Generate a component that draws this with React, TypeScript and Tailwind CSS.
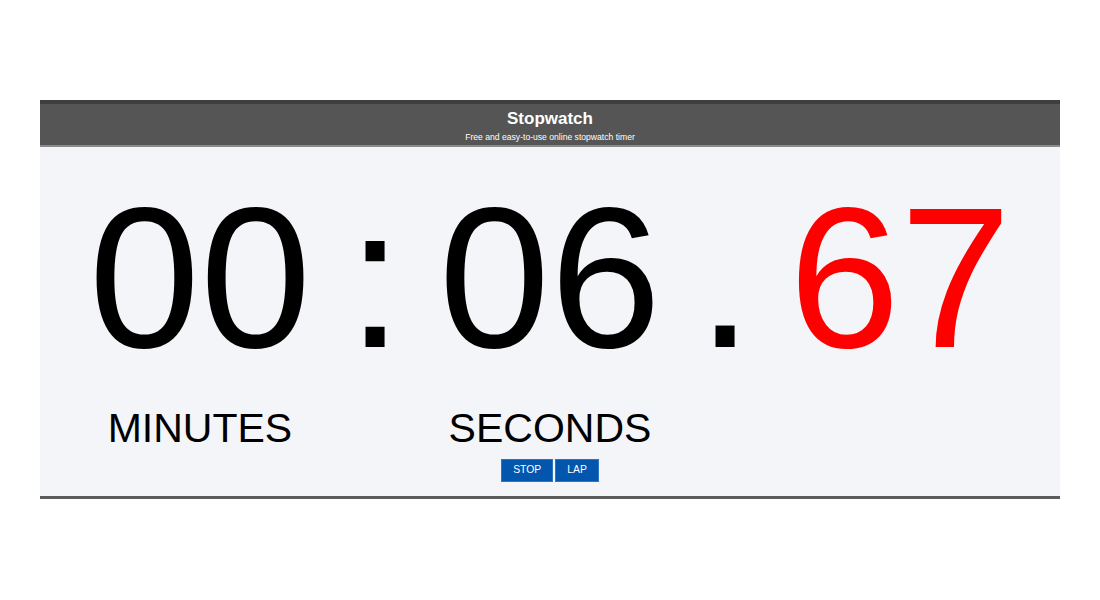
export default function App() {
  return (
    <div className="w-[1100px] h-[600px] bg-white pt-[100px] px-[40px] font-['Liberation_Sans',Arial,sans-serif]">
      <div className="w-[1020px] border-b-[3px] border-[#5c5c5c] bg-[#f4f5f9]">
        {/* Header */}
        <header className="border-t-[4px] border-[#3e3e3e] border-b-2 border-b-[#8a8a8a] bg-[#555555] h-[47px] pt-[5px] text-center text-white">
          <h1 className="text-[17px] leading-[20px] font-bold">Stopwatch</h1>
          <p className="mt-[3px] text-[8.6px] leading-[10px]">Free and easy-to-use online stopwatch timer</p>
        </header>

        {/* Timer */}
        <div className="pt-[31px] pb-[14px] flex flex-col items-center">
          <div className="grid grid-cols-[auto_auto_auto_auto_auto] gap-x-[36px] text-black">
            <span className="text-[200px] leading-[200px]">00</span>
            <span className="text-[200px] leading-[200px]">:</span>
            <span className="text-[200px] leading-[200px]">06</span>
            <span className="text-[200px] leading-[200px]">.</span>
            <span className="text-[200px] leading-[200px] text-[#ff0000]">67</span>

            <span className="mt-[27px] text-center text-[41px] leading-[46px]">MINUTES</span>
            <span />
            <span className="mt-[27px] text-center text-[41px] leading-[46px]">SECONDS</span>
            <span />
            <span />
          </div>

          <div className="mt-[8px] flex gap-[2px]">
            <button className="h-[23px] px-[11px] bg-[#0356ad] border border-[#2f74c2] text-white text-[10.4px] leading-none">
              STOP
            </button>
            <button className="h-[23px] px-[11px] bg-[#0356ad] border border-[#2f74c2] text-white text-[10.4px] leading-none">
              LAP
            </button>
          </div>
        </div>
      </div>
    </div>
  );
}
